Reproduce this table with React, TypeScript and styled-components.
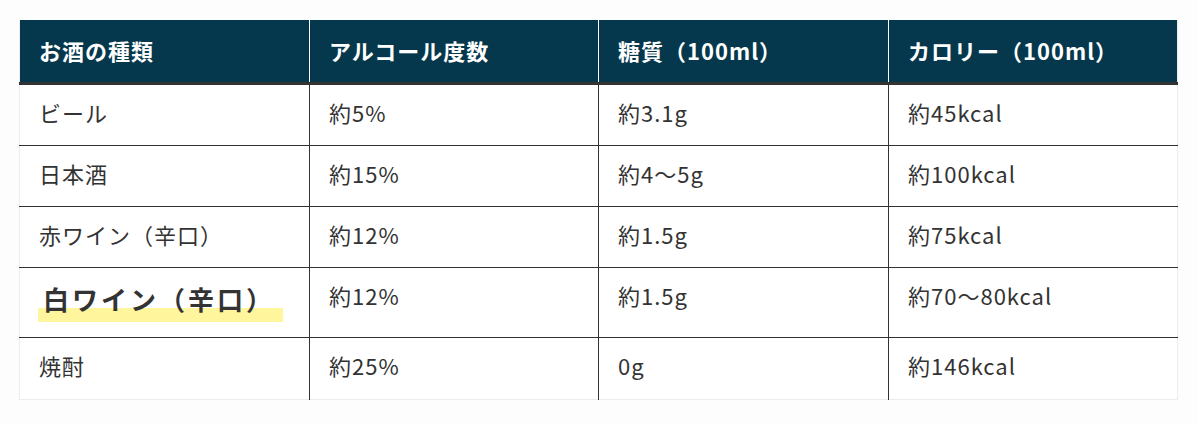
import React from "react"
import styled, { createGlobalStyle } from "styled-components"

const GlobalStyle = createGlobalStyle`
  html, body {
    margin: 0;
    padding: 0;
    background: #fdfdfd;
  }
  body {
    font-family: "Noto Sans CJK JP", "Noto Sans", sans-serif;
    color: #333;
  }
`

type Row = {
  name: string
  alcohol: string
  sugar: string
  calorie: string
  highlight?: boolean
}

const headers = ["お酒の種類", "アルコール度数", "糖質（100ml）", "カロリー（100ml）"]

const rows: Row[] = [
  { name: "ビール", alcohol: "約5%", sugar: "約3.1g", calorie: "約45kcal" },
  { name: "日本酒", alcohol: "約15%", sugar: "約4～5g", calorie: "約100kcal" },
  { name: "赤ワイン（辛口）", alcohol: "約12%", sugar: "約1.5g", calorie: "約75kcal" },
  {
    name: "白ワイン（辛口）",
    alcohol: "約12%",
    sugar: "約1.5g",
    calorie: "約70～80kcal",
    highlight: true,
  },
  { name: "焼酎", alcohol: "約25%", sugar: "0g", calorie: "約146kcal" },
]

const App = () => {
  return (
    <>
      <GlobalStyle />
      <Page>
        <Table>
          <colgroup>
            <col style={{ width: 290 }} />
            <col style={{ width: 289 }} />
            <col style={{ width: 290 }} />
            <col style={{ width: 289 }} />
          </colgroup>
          <thead>
            <tr>
              {headers.map((h) => (
                <HeadCell key={h}>{h}</HeadCell>
              ))}
            </tr>
          </thead>
          <tbody>
            {rows.map((row) => (
              <BodyRow key={row.name}>
                <Cell>
                  {row.highlight ? <Marker>{row.name}</Marker> : row.name}
                </Cell>
                <Cell>{row.alcohol}</Cell>
                <Cell>{row.sugar}</Cell>
                <Cell>{row.calorie}</Cell>
              </BodyRow>
            ))}
          </tbody>
        </Table>
      </Page>
    </>
  )
}

export default App

const Page = styled.div`
  padding: 20px 0 0 19px;
`

const Table = styled.table`
  border-collapse: collapse;
  table-layout: fixed;
  width: 1158px;
  background: #fff;
  border-left: 1px solid #ececec;
  border-right: 1px solid #ececec;
  border-bottom: 1px solid #ececec;
`

const HeadCell = styled.th`
  height: 63px;
  padding: 0 19px 2px;
  box-sizing: border-box;
  background: #05384c;
  color: #fff;
  text-align: left;
  font-size: 22px;
  font-weight: 700;
  letter-spacing: 1px;
  border-bottom: 3px solid #333;
  border-left: 1px solid #fff;

  &:first-child {
    border-left: none;
  }
`

const BodyRow = styled.tr`
  border-top: 1px solid #333;

  &:last-child td {
    border-bottom: none;
    padding-bottom: 21px;
  }
`

const Cell = styled.td`
  padding: 14px 19px 20px 19px;
  font-size: 22px;
  line-height: 26px;
  letter-spacing: 1px;
  color: #333;
  vertical-align: top;
  border-left: 1px solid #333;
  border-bottom: 1px solid #333;

  &:first-child {
    border-left: none;
  }
`

const Marker = styled.span`
  display: inline-block;
  font-size: 26px;
  font-weight: 700;
  letter-spacing: 3px;
  line-height: 34px;
  padding: 0 8px 6px 5px;
  margin: 0 0 -5px -1px;
  background: linear-gradient(transparent 66%, #fff59d 66%);
`
